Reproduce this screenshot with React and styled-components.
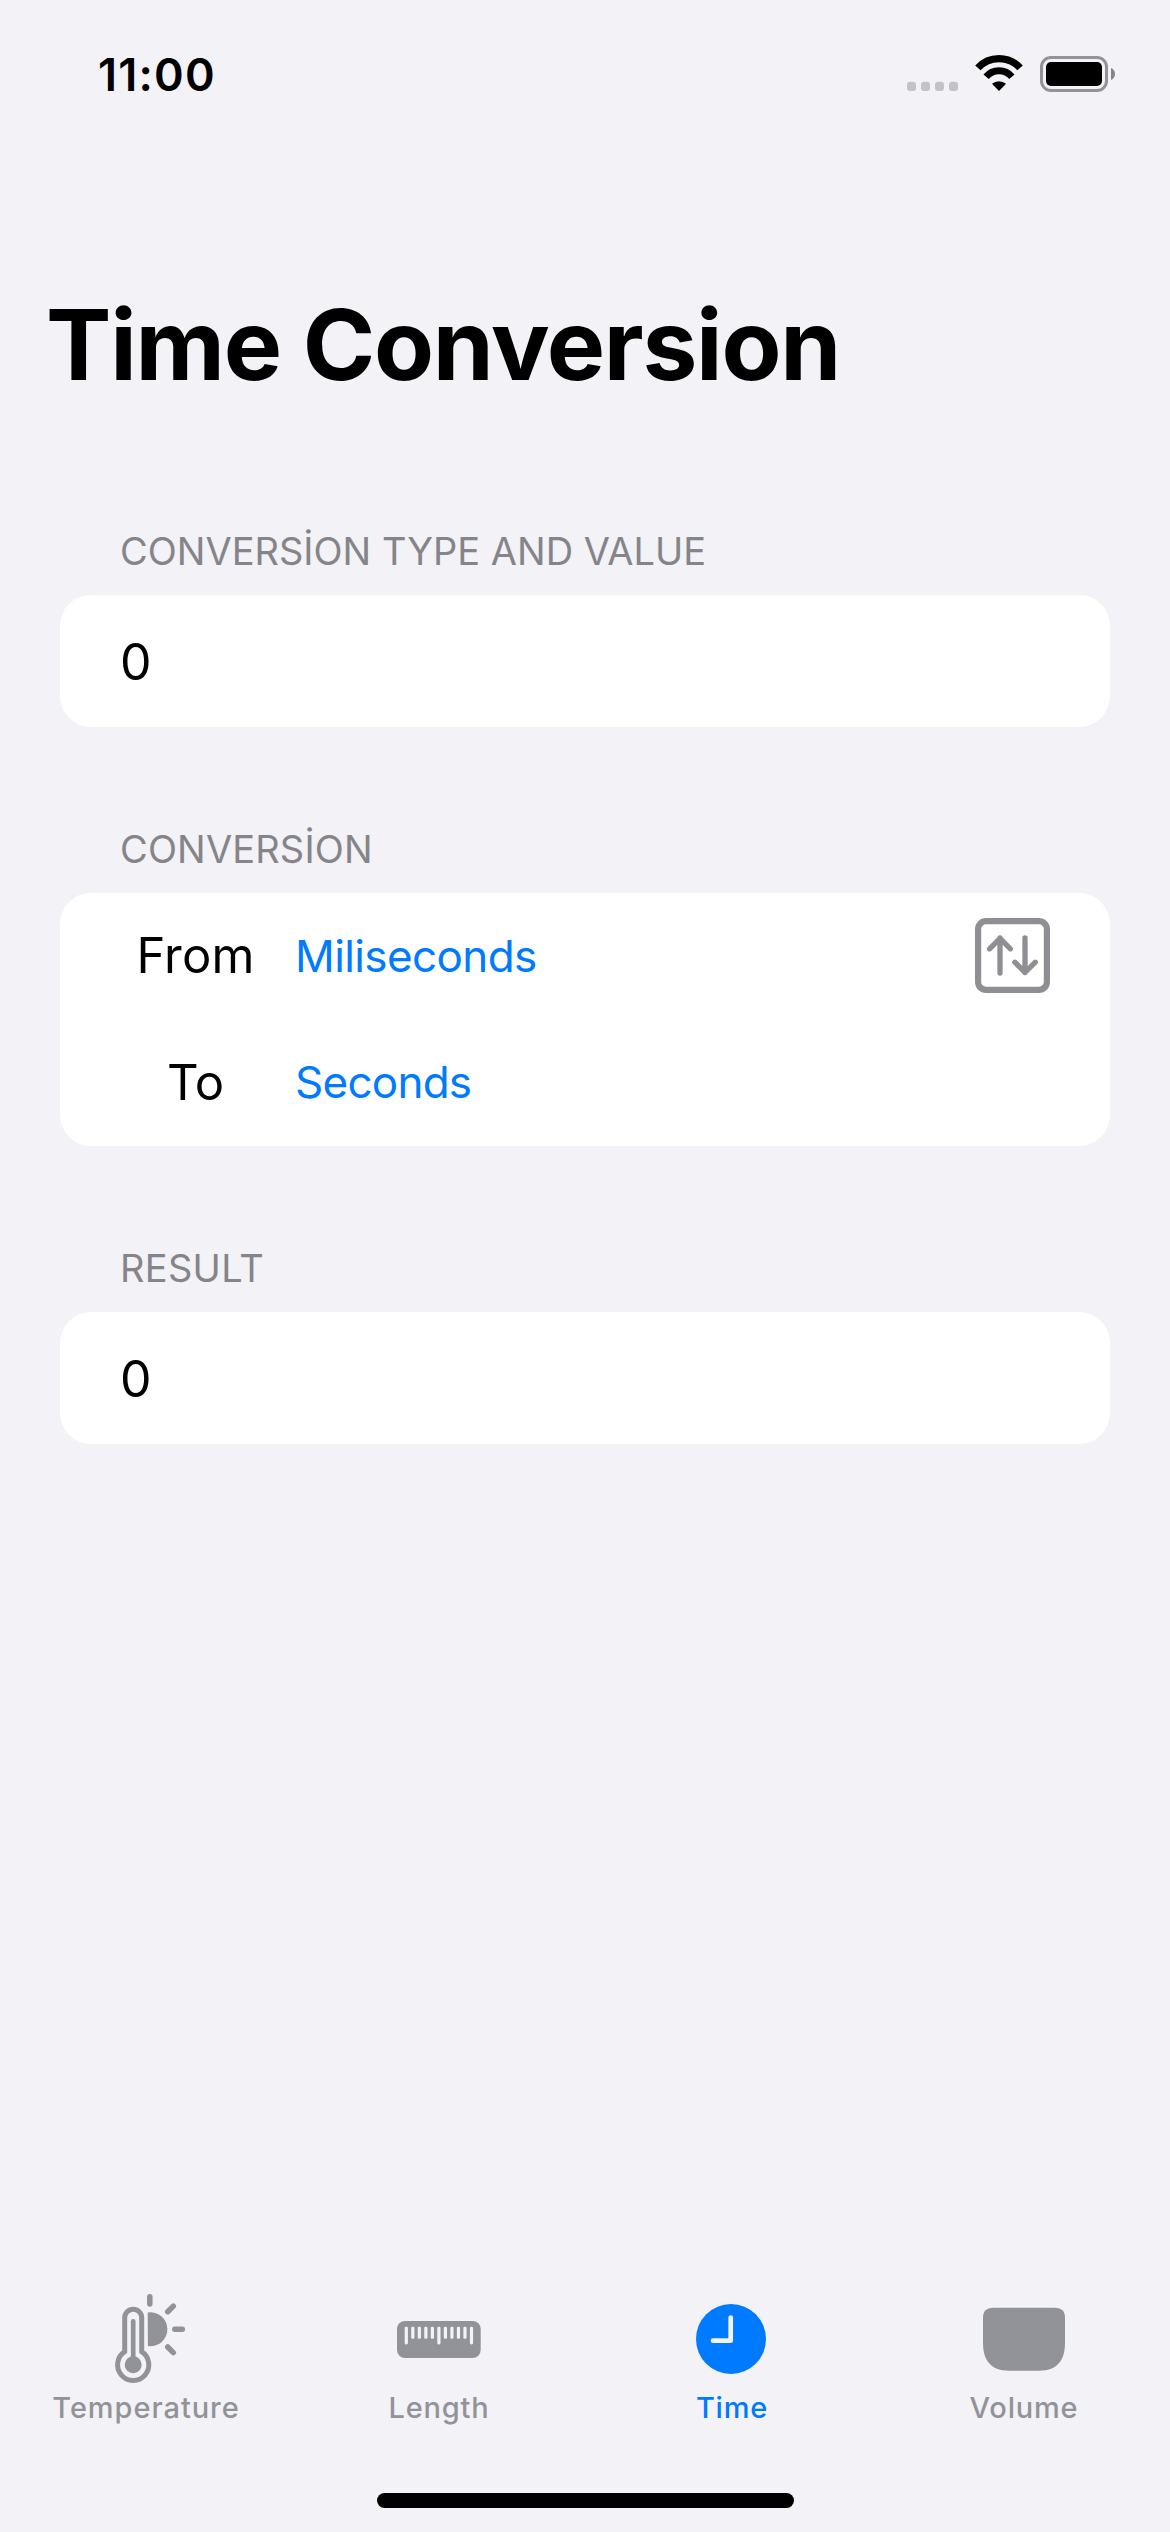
import React from "react";
import styled, { createGlobalStyle } from "styled-components";

const GlobalStyle = createGlobalStyle`
  * { box-sizing: border-box; }
  body { margin: 0; background: #f2f2f7; }
`;

const Screen = styled.main`
  display: flex;
  flex-direction: column;
  width: 1170px;
  height: 2532px;
  background: #f2f2f7;
  color: #000;
  font-family: Inter, "Liberation Sans", sans-serif;
  white-space: nowrap;
  overflow: hidden;
`;

const StatusBar = styled.header`
  display: flex;
  justify-content: space-between;
  align-items: center;
  height: 149px;
  padding: 0 55px 0 98px;
`;

const Clock = styled.span`
  font-size: 45px;
  font-weight: 600;
  line-height: 50px;
  letter-spacing: 1.2px;
`;

const StatusIcons = styled.div`
  display: flex;
  align-items: flex-start;
  gap: 17px;
  padding-bottom: 2px;
`;

const Title = styled.h1`
  margin: 136px 0 121px;
  padding-left: 46px;
  font-size: 98px;
  font-weight: 700;
  line-height: 120px;
  letter-spacing: -1.25px;
`;

const Form = styled.div`
  display: flex;
  flex-direction: column;
  gap: 97px;
  padding: 0 60px;
`;

const Section = styled.section`
  display: flex;
  flex-direction: column;
  gap: 19px;
`;

const SectionLabel = styled.h2`
  margin: 0;
  padding-left: 60px;
  font-size: 38px;
  font-weight: 400;
  line-height: 50px;
  letter-spacing: ${(p) => p.$tracking || "0px"};
  color: #858589;
`;

const Card = styled.div`
  border-radius: 31px;
  background: #fff;
  padding: 0 60px;
`;

const ValueRow = styled.div`
  height: 132px;
  padding-top: 1px;
  font-size: 50px;
  line-height: 132px;
`;

const UnitRow = styled.div`
  display: flex;
  align-items: center;
  height: ${(p) => p.$height}px;
`;

const UnitName = styled.span`
  width: 151px;
  margin-right: 24px;
  text-align: center;
  font-size: 49px;
  line-height: 60px;
  letter-spacing: ${(p) => p.$tracking || "0px"};
`;

const UnitPicker = styled.button`
  padding: 0;
  border: 0;
  background: none;
  font: 400 44px/60px Inter, "Liberation Sans", sans-serif;
  letter-spacing: ${(p) => p.$tracking || "0px"};
  margin-bottom: ${(p) => p.$lift || 0}px;
  color: #007aff;
`;

const SwapButton = styled.button`
  display: flex;
  margin: 0 0 1px auto;
  padding: 0;
  border: 0;
  background: none;
  color: #8e8e93;
`;

const TabBar = styled.nav`
  display: grid;
  grid-template-columns: 292px 294px 292px 292px;
  margin-top: auto;
`;

const Tab = styled.div`
  display: flex;
  flex-direction: column;
  align-items: center;
  color: ${(p) => (p.$active ? "#007aff" : "#929398")};
`;

const TabLabel = styled.span`
  font-size: 29px;
  font-weight: 500;
  line-height: 37px;
  letter-spacing: ${(p) => p.$tracking};
`;

const HomeIndicator = styled.div`
  width: 417px;
  height: 15px;
  margin: 67px auto 24px;
  border-radius: 8px;
  background: #000;
`;

const SignalIcon = () => (
  <svg width="51" height="36" viewBox="0 0 51 36" fill="#c3c2c7">
    {[0, 14, 28, 42].map((x) => (
      <rect key={x} x={x} y="26.7" width="9" height="9.2" rx="3" />
    ))}
  </svg>
);

const WifiIcon = () => (
  <svg width="48" height="36" viewBox="0 0 48 36" fill="none" stroke="#000" strokeWidth="7.3">
    <path d="M2.9 12.9A28.7 28.7 0 0 1 45.1 12.9" />
    <path d="M11.1 21.8A16.9 16.9 0 0 1 36.9 21.8" strokeWidth="6.9" />
    <path d="M24 36L17 28.8A10.5 10.5 0 0 1 31 28.8Z" fill="#000" stroke="none" />
  </svg>
);

const BatteryIcon = () => (
  <svg width="75" height="37" viewBox="0 -1 75 37" fill="none">
    <rect x="1.5" y="1.5" width="65" height="33" rx="9.5" stroke="#939297" strokeWidth="3" />
    <rect x="6" y="6" width="56" height="24" rx="5" fill="#000" />
    <path d="M71 12C76.3 13.8 76.3 22.2 71 24Z" fill="#858489" />
  </svg>
);

const SwapIcon = () => (
  <svg width="75" height="75" viewBox="0 0 75 75" fill="none" stroke="currentColor" strokeWidth="5.3" strokeLinecap="round" strokeLinejoin="round">
    <rect x="3.1" y="3.1" width="68.8" height="68.8" rx="8" strokeWidth="6.2" />
    <path d="M25 55V20M14.6 30.8L25 20.4L35.4 30.8" />
    <path d="M50 20V54.5M39.9 44.2L50 54.5L60.3 44.2" />
  </svg>
);

const ThermometerIcon = () => (
  <svg width="100" height="100" viewBox="0 0 100 100" fill="none" stroke="currentColor" strokeLinecap="round">
    <path d="M28.7 62.7V28.7A8.5 8.5 0 0 1 45.7 28.7V62.7A15.6 15.6 0 1 1 28.7 62.7Z" strokeWidth="5" />
    <path d="M37.2 32.3V70" strokeWidth="4.7" />
    <circle cx="37.2" cy="75.7" r="8.5" fill="currentColor" stroke="none" />
    <path d="M51.7 23.5A17 17 0 1 1 51.9 57.1Z" fill="currentColor" stroke="none" />
    <path d="M53.8 7.8V15M71.7 22.7L77.3 17.1M78.8 40.3H86.3M71.7 58L77.3 63.6" strokeWidth="5.5" />
  </svg>
);

const RulerIcon = () => (
  <svg width="100" height="100" viewBox="0 0 100 100">
    <rect x="8" y="32" width="83.7" height="37" rx="8" fill="currentColor" />
    {Array.from({ length: 11 }, (_, i) => (
      <rect key={i} x={15.7 + i * 6.52} y="37.7" width="3.2" height={i % 5 ? 12 : 17.7} rx="1.3" fill="#f2f2f7" />
    ))}
  </svg>
);

const ClockIcon = () => (
  <svg width="100" height="100" viewBox="0 0 100 100" fill="none">
    <circle cx="49" cy="50" r="35" fill="currentColor" />
    <path d="M48.7 28.6V51.7H31" stroke="#f2f2f7" strokeWidth="4.7" strokeLinecap="round" strokeLinejoin="round" />
  </svg>
);

const ContainerIcon = () => (
  <svg width="100" height="100" viewBox="0 0 100 100" fill="currentColor">
    <path d="M9 29C9 22 12.5 18.7 19 18.7H81C87.5 18.7 91 22 91 29V54C91 72 82.5 81.7 65 81.7H35C17.5 81.7 9 72 9 54Z" />
  </svg>
);

const TABS = [
  { name: "Temperature", Icon: ThermometerIcon, tracking: "0.95px" },
  { name: "Length", Icon: RulerIcon, tracking: "0.8px" },
  { name: "Time", Icon: ClockIcon, tracking: "0.8px", active: true },
  { name: "Volume", Icon: ContainerIcon, tracking: "0.8px" },
];

export default function App() {
  return (
    <Screen>
      <GlobalStyle />
      <StatusBar>
        <Clock>11:00</Clock>
        <StatusIcons>
          <SignalIcon />
          <WifiIcon />
          <BatteryIcon />
        </StatusIcons>
      </StatusBar>
      <Title>Time Conversion</Title>
      <Form>
        <Section>
          <SectionLabel>CONVERSİON TYPE AND VALUE</SectionLabel>
          <Card>
            <ValueRow>0</ValueRow>
          </Card>
        </Section>
        <Section>
          <SectionLabel $tracking="0.15px">CONVERSİON</SectionLabel>
          <Card>
            <UnitRow $height={126}>
              <UnitName $tracking="0.2px">From</UnitName>
              <UnitPicker $tracking="-0.6px">Miliseconds</UnitPicker>
              <SwapButton aria-label="Swap units">
                <SwapIcon />
              </SwapButton>
            </UnitRow>
            <UnitRow $height={127}>
              <UnitName>To</UnitName>
              <UnitPicker $tracking="-0.75px" $lift={2}>Seconds</UnitPicker>
            </UnitRow>
          </Card>
        </Section>
        <Section>
          <SectionLabel $tracking="0.3px">RESULT</SectionLabel>
          <Card>
            <ValueRow>0</ValueRow>
          </Card>
        </Section>
      </Form>
      <TabBar>
        {TABS.map(({ name, Icon, tracking, active }) => (
          <Tab key={name} $active={active}>
            <Icon />
            <TabLabel $tracking={tracking}>{name}</TabLabel>
          </Tab>
        ))}
      </TabBar>
      <HomeIndicator />
    </Screen>
  );
}
